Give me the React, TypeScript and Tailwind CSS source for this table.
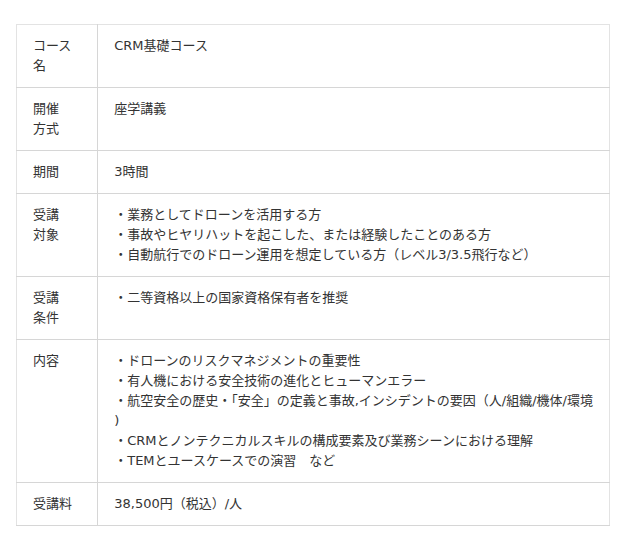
const ROWS: { label: string[]; lines: string[] }[] = [
  { label: ['コース', '名'], lines: ['CRM基礎コース'] },
  { label: ['開催', '方式'], lines: ['座学講義'] },
  { label: ['期間'], lines: ['3時間'] },
  {
    label: ['受講', '対象'],
    lines: [
      '・業務としてドローンを活用する方',
      '・事故やヒヤリハットを起こした、または経験したことのある方',
      '・自動航行でのドローン運用を想定している方（レベル3/3.5飛行など）',
    ],
  },
  { label: ['受講', '条件'], lines: ['・二等資格以上の国家資格保有者を推奨'] },
  {
    label: ['内容'],
    lines: [
      '・ドローンのリスクマネジメントの重要性',
      '・有人機における安全技術の進化とヒューマンエラー',
      '・航空安全の歴史・「安全」の定義と事故,インシデントの要因（人/組織/機体/環境',
      ')',
      '・CRMとノンテクニカルスキルの構成要素及び業務シーンにおける理解',
      '・TEMとユースケースでの演習　など',
    ],
  },
  { label: ['受講料'], lines: ['38,500円（税込）/人'] },
];

export default function App() {
  return (
    <div className="min-h-[551px] bg-white pt-6 pl-4 font-['DejaVu_Sans','Noto_Sans_CJK_JP',sans-serif] text-[13px] leading-5 text-[#333]">
      <table className="w-[594px] border-collapse border border-[#e3e3e3]">
        <tbody>
          {ROWS.map((row) => (
            <tr key={row.label.join('')} className="border-b border-[#d6d6d6]">
              <th className="w-[82px] border-r border-[#d6d6d6] px-4 py-[11px] text-left align-top font-normal">
                {row.label.map((part, i) => (
                  <div key={i} className="whitespace-nowrap">
                    {part}
                  </div>
                ))}
              </th>
              <td className="px-4 py-[11px] align-top">
                {row.lines.map((line, i) => (
                  <div key={i} className="whitespace-nowrap">
                    {line}
                  </div>
                ))}
              </td>
            </tr>
          ))}
        </tbody>
      </table>
    </div>
  );
}
